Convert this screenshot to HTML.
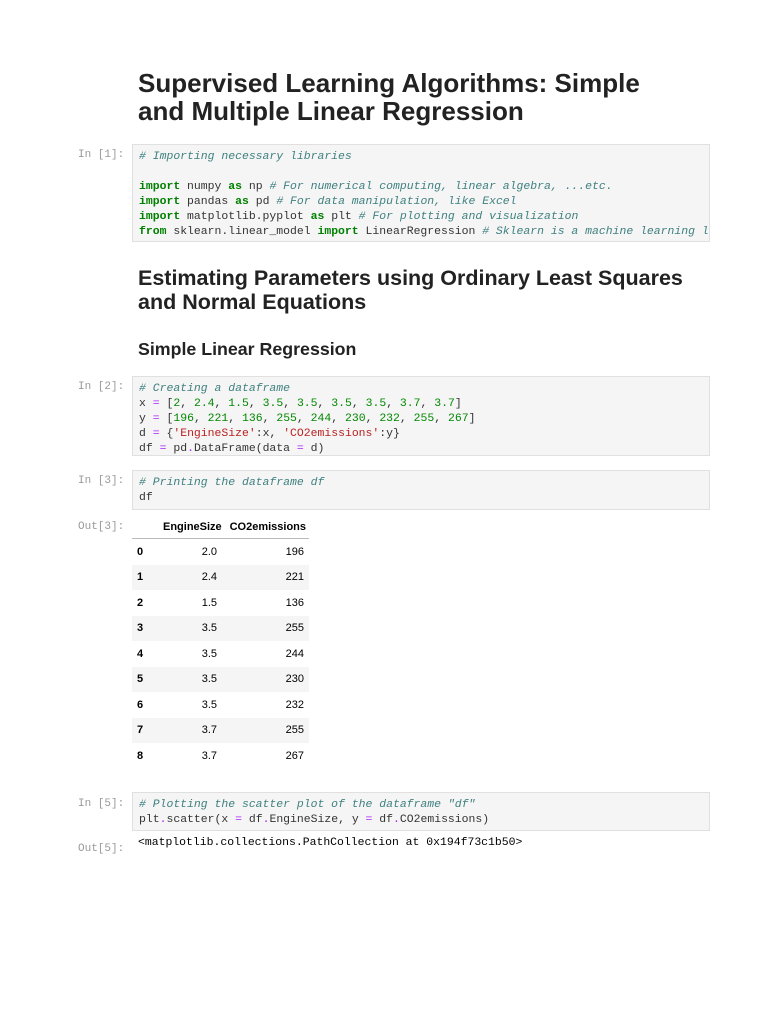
<!DOCTYPE html><html><head><style>
body{margin:0;background:#fff;font-family:"Liberation Sans",sans-serif;color:#000;}
.h{position:absolute;left:138px;color:#222;font-family:"Liberation Sans",sans-serif;font-weight:bold;}
.p{position:absolute;left:78px;font:11px "Liberation Mono",monospace;color:#999;}
.c{position:absolute;left:132px;width:578px;background:#f5f5f5;border:1px solid #e0e0e0;font:11.45px/15px "Liberation Mono","DejaVu Sans Mono",monospace;padding:4px 6px;box-sizing:border-box;white-space:pre;overflow:hidden;color:#333}
.k{color:#008000;font-weight:bold}.cm{color:#408080;font-style:italic}.n{color:#080}.s{color:#ba2121}.o{color:#a2f}
table{position:absolute;left:132px;top:516px;border-collapse:collapse;font:11px "Liberation Sans",sans-serif;width:177px;table-layout:fixed}
td,th{height:25.5px;padding:0 5px;text-align:right;font-weight:normal;font-size:11px;white-space:nowrap}
th{font-weight:bold;height:22px;padding:0 3px}
thead th{border-bottom:1px solid #bbb}
tr.z{background:#f5f5f5}
td.i{font-weight:bold;text-align:left}
</style></head><body>
<div class="h" style="top:69px;font-size:26px;line-height:28px">Supervised Learning Algorithms: Simple<br>and Multiple Linear Regression</div>
<div class="p" style="top:149px">In [1]:</div>
<div class="c" style="top:144px;height:98px"><span class="cm"># Importing necessary libraries</span>

<span class="k">import</span> numpy <span class="k">as</span> np <span class="cm"># For numerical computing, linear algebra, ...etc.</span>
<span class="k">import</span> pandas <span class="k">as</span> pd <span class="cm"># For data manipulation, like Excel</span>
<span class="k">import</span> matplotlib.pyplot <span class="k">as</span> plt <span class="cm"># For plotting and visualization</span>
<span class="k">from</span> sklearn.linear_model <span class="k">import</span> LinearRegression <span class="cm"># Sklearn is a machine learning library</span></div>
<div class="h" style="top:266px;font-size:21.5px;line-height:24px">Estimating Parameters using Ordinary Least Squares<br>and Normal Equations</div>
<div class="h" style="top:339px;font-size:17.8px">Simple Linear Regression</div>
<div class="p" style="top:381px">In [2]:</div>
<div class="c" style="top:376px;height:80px"><span class="cm"># Creating a dataframe</span>
x <span class="o">=</span> [<span class="n">2</span>, <span class="n">2.4</span>, <span class="n">1.5</span>, <span class="n">3.5</span>, <span class="n">3.5</span>, <span class="n">3.5</span>, <span class="n">3.5</span>, <span class="n">3.7</span>, <span class="n">3.7</span>]
y <span class="o">=</span> [<span class="n">196</span>, <span class="n">221</span>, <span class="n">136</span>, <span class="n">255</span>, <span class="n">244</span>, <span class="n">230</span>, <span class="n">232</span>, <span class="n">255</span>, <span class="n">267</span>]
d <span class="o">=</span> {<span class="s">'EngineSize'</span>:x, <span class="s">'CO2emissions'</span>:y}
df <span class="o">=</span> pd<span class="o">.</span>DataFrame(data <span class="o">=</span> d)</div>
<div class="p" style="top:475px">In [3]:</div>
<div class="c" style="top:470px;height:40px"><span class="cm"># Printing the dataframe df</span>
df</div>
<div class="p" style="top:521px">Out[3]:</div>
<table><colgroup><col style="width:28px"><col style="width:62px"><col style="width:87px"></colgroup><thead><tr><th></th><th>EngineSize</th><th>CO2emissions</th></tr></thead><tbody>
<tr><td class="i">0</td><td>2.0</td><td>196</td></tr>
<tr class="z"><td class="i">1</td><td>2.4</td><td>221</td></tr>
<tr><td class="i">2</td><td>1.5</td><td>136</td></tr>
<tr class="z"><td class="i">3</td><td>3.5</td><td>255</td></tr>
<tr><td class="i">4</td><td>3.5</td><td>244</td></tr>
<tr class="z"><td class="i">5</td><td>3.5</td><td>230</td></tr>
<tr><td class="i">6</td><td>3.5</td><td>232</td></tr>
<tr class="z"><td class="i">7</td><td>3.7</td><td>255</td></tr>
<tr><td class="i">8</td><td>3.7</td><td>267</td></tr>
</tbody></table>
<div class="p" style="top:798px">In [5]:</div>
<div class="c" style="top:792px;height:39px"><span class="cm"># Plotting the scatter plot of the dataframe "df"</span>
plt<span class="o">.</span>scatter(x <span class="o">=</span> df<span class="o">.</span>EngineSize, y <span class="o">=</span> df<span class="o">.</span>CO2emissions)</div>
<div class="p" style="top:843px">Out[5]:</div>
<div style="position:absolute;left:138px;top:836px;font:11.45px 'Liberation Mono',monospace">&lt;matplotlib.collections.PathCollection at 0x194f73c1b50&gt;</div>
</body></html>
